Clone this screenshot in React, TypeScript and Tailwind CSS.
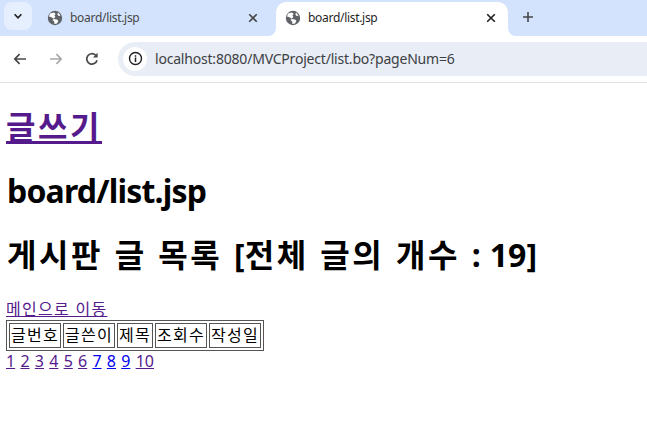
const uiFont = '[font-family:"Noto_Sans","Noto_Sans_CJK_KR",sans-serif]';

function Globe() {
  return (
    <svg viewBox="0 0 16 16" className="h-[16px] w-[16px] shrink-0">
      <circle cx="8" cy="8" r="7.2" fill="#5f6368" />
      <path d="M3 3.6 L7 2.4 L8.6 4 L7.4 5.6 L8.4 7 L6.4 8.8 L4.6 7.2 L2 6.4 Z" fill="#fff" />
      <path d="M7.4 14 L7.2 11.4 L5.4 10 L7 9 L10 9.4 L11.4 11 L10 13.6 Z" fill="#fff" />
      <path d="M11 2.6 L13.6 5.4 L11.6 6 L10.4 4.4 Z" fill="#fff" />
    </svg>
  );
}

function CloseIcon({ color }: { color: string }) {
  return (
    <svg viewBox="0 0 10 10" className="h-[10px] w-[10px]">
      <path d="M1.2 1.2 L8.8 8.8 M8.8 1.2 L1.2 8.8" stroke={color} strokeWidth="1.6" fill="none" />
    </svg>
  );
}

function Toolbar() {
  return (
    <div className="flex h-[47px] items-center border-b border-[#e0e0e0] bg-white pb-px">
      <div className="flex w-[118px] shrink-0 items-center">
        <svg viewBox="0 0 16 16" className="ml-[12px] h-[16px] w-[16px]">
          <path d="M14 8 H3 M7.6 3.2 L2.8 8 L7.6 12.8" stroke="#474747" strokeWidth="1.7" fill="none" />
        </svg>
        <svg viewBox="0 0 16 16" className="ml-[20px] h-[16px] w-[16px]">
          <path d="M2 8 H13 M8.4 3.2 L13.2 8 L8.4 12.8" stroke="#a8a8a8" strokeWidth="1.7" fill="none" />
        </svg>
        <svg viewBox="0 0 16 16" className="ml-[20px] h-[16px] w-[16px]">
          <path d="M13 9.2 A5.2 5.2 0 1 1 11.6 4.2" stroke="#474747" strokeWidth="1.7" fill="none" />
          <path d="M13.6 1.8 V6.4 H9 Z" fill="#474747" />
        </svg>
      </div>
      <div className="flex h-[34px] flex-1 items-center rounded-l-[17px] bg-[#e9edf6]">
        <div className="ml-[5px] flex h-[24px] w-[24px] items-center justify-center rounded-full bg-white">
          <svg viewBox="0 0 16 16" className="h-[15px] w-[15px]">
            <circle cx="8" cy="8" r="6.4" stroke="#202124" strokeWidth="1.5" fill="none" />
            <path d="M8 7 V11.6 M8 4.4 V6" stroke="#202124" strokeWidth="1.6" fill="none" />
          </svg>
        </div>
        <span className={`ml-[8px] text-[14px] tracking-[-0.2px] text-[#3c4043] ${uiFont}`}>localhost:8080/MVCProject/list.bo?pageNum=6</span>
      </div>
    </div>
  );
}

function TabStrip() {
  return (
    <div className={`flex h-[36px] bg-[#d3e3fd] pt-[2px] text-[12px] tracking-[-0.3px] ${uiFont}`}>
      <div className="ml-[4px] flex h-[28px] w-[28px] items-center justify-center rounded-[8px] bg-[#e6effd]">
        <svg viewBox="0 0 10 10" className="h-[10px] w-[10px]">
          <path d="M1.6 3.2 L5 6.8 L8.4 3.2" stroke="#1f1f1f" strokeWidth="1.6" fill="none" />
        </svg>
      </div>
      <div className="flex h-[34px] w-[244px] items-center pl-[15px] pb-[2px]">
        <Globe />
        <span className="ml-[7px] flex-1 text-[#474747]">board/list.jsp</span>
        <span className="mr-[18px] flex"><CloseIcon color="#474747" /></span>
      </div>
      <div className="relative flex h-[34px] w-[232px] items-center rounded-t-[10px] bg-white pl-[9px] pb-[2px]">
        {/* curved feet where the active tab meets the toolbar */}
        <svg viewBox="0 0 8 8" className="absolute bottom-0 left-[-8px] h-[8px] w-[8px]">
          <path d="M8 0 A8 8 0 0 1 0 8 H8 Z" fill="#fff" />
        </svg>
        <svg viewBox="0 0 8 8" className="absolute bottom-0 right-[-8px] h-[8px] w-[8px]">
          <path d="M0 0 A8 8 0 0 0 8 8 H0 Z" fill="#fff" />
        </svg>
        <Globe />
        <span className="ml-[7px] flex-1 text-[#1f1f1f]">board/list.jsp</span>
        <span className="mr-[12px] flex"><CloseIcon color="#1f1f1f" /></span>
      </div>
      <div className="ml-[14px] flex h-[30px] w-[12px] items-center justify-center">
        <svg viewBox="0 0 12 12" className="h-[12px] w-[12px]">
          <path d="M6 1 V11 M1 6 H11" stroke="#474747" strokeWidth="1.6" fill="none" />
        </svg>
      </div>
    </div>
  );
}

export default function App() {
  const headers = ["글번호", "글쓴이", "제목", "조회수", "작성일"];
  const pages = [1, 2, 3, 4, 5, 6, 7, 8, 9, 10];
  const hangul = "tracking-[0.08em]";

  return (
    <div className="h-[423px] w-[647px] overflow-hidden bg-white">
      <TabStrip />
      <Toolbar />
      <div className={`px-[6px] text-[16px] leading-[18px] text-black ${uiFont}`}>
        <h1 className="mt-[20px] text-[32px] font-bold leading-[47px]">
          <a href="#" className={`text-[#551a8b] underline ${hangul}`}>글쓰기</a>
        </h1>
        <h1 className="mt-[17px] ml-[1px] text-[32px] font-bold leading-[47px] tracking-[-0.8px]">board/list.jsp</h1>
        <h1 className="mt-[17px] ml-[1px] text-[32px] font-bold leading-[47px] [word-spacing:0.8px]">
          <span className={hangul}>게시판 글 목록 </span>[<span className={hangul}>전체 글의 개수 </span>: 19]
        </h1>
        <div className="mt-[22px]">
          <a href="#" className={`text-[#551a8b] underline ${hangul}`}>메인으로 이동</a>
        </div>
        <table className="mt-[2px] border-separate border-spacing-[2px] border border-[#555]">
          <tbody>
            <tr>
              {headers.map((h) => (
                <td key={h} className={`border border-[#555] p-px leading-[21px] ${hangul}`}>{h}</td>
              ))}
            </tr>
          </tbody>
        </table>
        <div className="flex gap-[5.25px] leading-[20px]">
          {pages.map((p) => (
            <a key={p} href="#" className={p < 7 || p === 10 ? "text-[#551a8b] underline" : "text-[#0000ee] underline"}>{p}</a>
          ))}
        </div>
      </div>
    </div>
  );
}
